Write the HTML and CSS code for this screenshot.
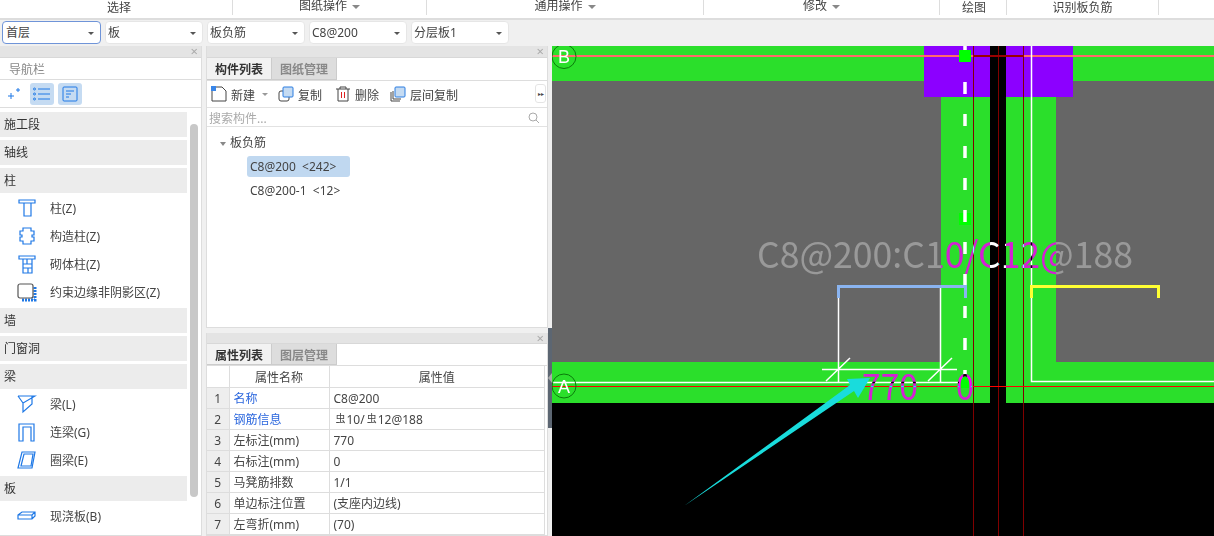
FILE: index.html
```html
<!DOCTYPE html>
<html lang="zh-CN">
<head>
    <meta charset="UTF-8">
    <title>识别板负筋</title>
    <link rel="stylesheet" href="styles.css">
</head>
<body>
    <div class="menu-groups">
        <div class="group g-select">选择</div>
        <div class="group g-paper">图纸操作<i class="caret"></i></div>
        <div class="group g-common">通用操作<i class="caret"></i></div>
        <div class="group g-edit">修改<i class="caret"></i></div>
        <div class="group g-draw">绘图</div>
        <div class="group g-detect">识别板负筋</div>
    </div>

    <div class="combos">
        <div class="combo active">首层<i class="caret small"></i></div>
        <div class="combo">板<i class="caret small"></i></div>
        <div class="combo">板负筋<i class="caret small"></i></div>
        <div class="combo">C8@200<i class="caret small"></i></div>
        <div class="combo">分层板1<i class="caret small"></i></div>
    </div>

    <div class="main">
        <!-- 导航栏 -->
        <div class="nav panel">
            <div class="panel-head"><span class="close">×</span></div>
            <div class="nav-title">导航栏</div>
            <div class="nav-tools">
                <svg class="tool-plus" width="14" height="14" viewBox="0 0 14 14"><path d="M1 9h6M4 6v6M9 3h4M11 1v4"/></svg>
                <span class="nav-btn">
                    <svg width="18" height="14" viewBox="0 0 18 14"><path d="M5 2h12M5 7h12M5 12h12"/><circle cx="1.500" cy="2" r="1"/><circle cx="1.500" cy="7" r="1"/><circle cx="1.500" cy="12" r="1"/></svg>
                </span>
                <span class="nav-btn">
                    <svg width="16" height="16" viewBox="0 0 16 16"><rect x="1" y="1" width="14" height="14" rx="1"/><path d="M4 5h8M4 8h5M4 11h3"/></svg>
                </span>
            </div>
            <div class="nav-body">
                <div class="nav-list">
                    <div class="cat">施工段</div>
                    <div class="cat">轴线</div>
                    <div class="cat">柱</div>
                    <div class="item">
                        <svg width="20" height="20" viewBox="0 0 20 20"><path d="M2 2h16v3h-4v13H7V5H2zM7 5h7"/></svg>柱(Z)
                    </div>
                    <div class="item">
                        <svg width="20" height="20" viewBox="0 0 20 20"><path d="M6 2h8v3h3v4h-2v2h2v4h-3v3H6v-3H3v-4h2V9H3V5h3z"/></svg>构造柱(Z)
                    </div>
                    <div class="item">
                        <svg width="20" height="20" viewBox="0 0 20 20"><path d="M2 2h16v3h-3v14H6V5H2zM6 5h9M6 10h9M6 14h9M10 5v5M11 14v5"/></svg>砌体柱(Z)
                    </div>
                    <div class="item">
                        <svg width="20" height="20" viewBox="0 0 20 20"><path class="hatch" d="M18 5v13H5"/><rect class="dark" x="1" y="2" width="15" height="14" rx="2"/></svg>约束边缘非阴影区(Z)
                    </div>
                    <div class="cat">墙</div>
                    <div class="cat">门窗洞</div>
                    <div class="cat">梁</div>
                    <div class="item">
                        <svg width="20" height="20" viewBox="0 0 20 20"><path d="M1 2h17L6 9v9l9-8V2M1 2l5 7"/></svg>梁(L)
                    </div>
                    <div class="item">
                        <svg width="20" height="20" viewBox="0 0 20 20"><path d="M2 19V2h15v17h-3V5H6v14z"/></svg>连梁(G)
                    </div>
                    <div class="item">
                        <svg width="20" height="20" viewBox="0 0 20 20"><path d="M5 2h13l-3 16H1zM7 4h9l-2 12H4z"/></svg>圈梁(E)
                    </div>
                    <div class="cat">板</div>
                    <div class="item">
                        <svg width="20" height="20" viewBox="0 0 20 20"><path d="M1 9l4-3h13v4l-3 3H1zM1 9h14l3-3M15 9v4"/></svg>现浇板(B)
                    </div>
                    <div class="item">
                        <svg width="20" height="20" viewBox="0 0 20 20"><path d="M2 2h16v8H2z"/></svg>
                    </div>
                </div>
                <div class="scrollbar"></div>
            </div>
        </div>

        <div class="middle">
            <!-- 构件列表 -->
            <div class="panel parts">
                <div class="panel-head"><span class="close">×</span></div>
                <div class="tabs">
                    <span class="tab on">构件列表</span>
                    <span class="tab">图纸管理</span>
                </div>
                <div class="part-tools">
                    <span class="ptool t-new">
                        <svg width="16" height="16" viewBox="0 0 16 16"><path class="dark" d="M1 5v10h14V5l-4-4H3"/><rect class="blue" x="0" y="0" width="5" height="5"/></svg>新建<i class="caret small"></i>
                    </span>
                    <span class="ptool t-copy">
                        <svg width="16" height="16" viewBox="0 0 16 16"><rect class="dark" x="1" y="5" width="10" height="10" rx="2"/><rect class="fill" x="5" y="1" width="10" height="10" rx="1"/></svg>复制
                    </span>
                    <span class="ptool t-del">
                        <svg width="16" height="16" viewBox="0 0 16 16"><path class="dark" d="M1 3h14M5 3V1h6v2M3 3v12h10V3"/><path class="red" d="M6.500 6v6M9.500 6v6"/></svg>删除
                    </span>
                    <span class="ptool t-floor">
                        <svg width="16" height="16" viewBox="0 0 16 16"><path class="dark" d="M1 6v9h9M3 5v8h8"/><rect class="fill" x="5" y="1" width="10" height="10" rx="1"/></svg>层间复制
                    </span>
                    <span class="more">▸▸</span>
                </div>
                <div class="search">
                    搜索构件...
                    <svg width="12" height="12" viewBox="0 0 12 12"><circle cx="5" cy="5" r="4"/><path d="M8 8l3 3"/></svg>
                </div>
                <div class="tree">
                    <div class="tree-head"><i class="caret"></i>板负筋</div>
                    <div class="tree-row selected">C8@200&nbsp; &lt;242&gt;</div>
                    <div class="tree-row">C8@200-1&nbsp; &lt;12&gt;</div>
                </div>
            </div>

            <!-- 属性列表 -->
            <div class="panel props">
                <div class="panel-head"><span class="close">×</span></div>
                <div class="tabs">
                    <span class="tab on">属性列表</span>
                    <span class="tab">图层管理</span>
                </div>
                <table class="prop-table">
                    <tr><th></th><th class="c-name">属性名称</th><th class="c-val">属性值</th></tr>
                    <tr><td class="idx">1</td><td class="link">名称</td><td>C8@200</td></tr>
                    <tr><td class="idx">2</td><td class="link">钢筋信息</td><td><span class="bar-mark">虫</span>10/<span class="bar-mark">虫</span>12@188</td></tr>
                    <tr><td class="idx">3</td><td>左标注(mm)</td><td>770</td></tr>
                    <tr><td class="idx">4</td><td>右标注(mm)</td><td>0</td></tr>
                    <tr><td class="idx">5</td><td>马凳筋排数</td><td>1/1</td></tr>
                    <tr><td class="idx">6</td><td>单边标注位置</td><td>(支座内边线)</td></tr>
                    <tr><td class="idx">7</td><td>左弯折(mm)</td><td>(70)</td></tr>
                </table>
            </div>
        </div>

        <div class="splitter"><span class="handle"></span></div>

        <!-- 绘图区 -->
        <svg class="canvas" width="662" height="490" viewBox="552 46 662 490">
            <rect x="552" y="46" width="662" height="490" fill="#000"/>
            <rect class="slab" x="552" y="81" width="389" height="281"/>
            <rect class="slab" x="1056" y="81" width="158" height="281"/>
            <path class="beam" d="M552 46H990V403H552V362H941V81H552Z"/>
            <path class="beam" d="M1006 46H1214V81H1056V362H1214V403H1006Z"/>
            <rect class="col" x="924" y="46" width="66" height="51"/>
            <rect class="col" x="1006" y="46" width="67" height="51"/>

            <path class="axis-dark" d="M973.500 46V536M998.500 46V536M1023.500 46V536"/>
            <path class="axis-top" d="M552 56H990M1006 56H1214"/>
            <path class="axis-top-dark" d="M973 56H1024"/>

            <path class="rebar" d="M1031.500 46V381.500H1214"/>
            <path class="rebar" d="M552 382.500H966M838.500 287V382M940.500 287V382M822 369.500H957M826 381L850 358M928 381L952 358"/>

            <path class="axis-red" d="M552 386.500H1214"/>

            <rect class="grip" x="959" y="50" width="12" height="12"/>
            <rect class="grip" x="959" y="213" width="12" height="12"/>
            <path class="dash" d="M965 46V50M965 82V382"/>
            <rect class="grip" x="959" y="377" width="12" height="11"/>

            <path class="br-blue" d="M838.500 298V286.500H965.500V298"/>
            <path class="br-yellow" d="M1031.500 298V286.500H1158.500V298"/>

            <circle class="axis-mark" cx="564" cy="56.500" r="12"/>
            <circle class="axis-mark" cx="564" cy="386" r="12"/>
            <text class="axis-letter" x="564" y="63">B</text>
            <text class="axis-letter" x="564" y="392.500">A</text>

            <text class="cad-text" x="757" y="268" textLength="376" lengthAdjust="spacingAndGlyphs">C8@200:C10/C12@188</text>
            <text class="cad-text" x="862" y="400" textLength="56" lengthAdjust="spacingAndGlyphs">770</text>
            <text class="cad-text" x="956" y="400" textLength="18" lengthAdjust="spacingAndGlyphs">0</text>

            <polygon class="arrow" points="684,506 850,385 847,379 870,378 858,398 854,391"/>
        </svg>
    </div>
</body>
</html>
```

FILE: styles.css
```css
* {
    box-sizing: border-box;
}

html, body {
    margin: 0;
    height: 536px;
    overflow: hidden;
}

body {
    width: 1214px;
    background: #f0f0f0;
    color: #444;
    font-family: "Noto Sans", "Noto Sans CJK SC", sans-serif;
    font-size: 12px;
}

.caret {
    display: inline-block;
    width: 0;
    height: 0;
    margin-left: 5px;
    border-left: 4px solid transparent;
    border-right: 4px solid transparent;
    border-top: 4px solid #888;
    vertical-align: middle;
}

.caret.small {
    border-left-width: 3px;
    border-right-width: 3px;
    border-top: 3px solid #555;
}

/* top menu group titles */
.menu-groups {
    display: flex;
    height: 20px;
    background: #fff;
    border-bottom: 2px solid #ddd;
}

.group {
    height: 15px;
    line-height: 14px;
    text-align: center;
    border-right: 1px solid #ddd;
}

.g-select { width: 233px; padding: 1px 0 0 6px; }
.g-paper { width: 194px; line-height: 12px; }
.g-common { width: 277px; line-height: 12px; }
.g-edit { width: 236px; line-height: 12px; }
.g-draw { width: 67px; padding: 1px 0 0 2px; }
.g-detect { width: 152px; padding-top: 1px; }

/* combos */
.combos {
    display: flex;
    gap: 4px;
    height: 26px;
    padding: 1px 0 0 2px;
}

.combo {
    position: relative;
    width: 98px;
    height: 23px;
    padding-left: 2px;
    line-height: 21px;
    background: #fff;
    border: 1px solid #e6e6e6;
    border-radius: 4px;
}

.combo.active {
    width: 99px;
    padding-left: 3px;
    border-color: #6f94d8;
}

.combo .caret {
    position: absolute;
    right: 6px;
    top: 10px;
}

.main {
    display: flex;
    height: 490px;
}

/* panels */
.panel {
    background: #fff;
    border: 1px solid #ddd;
    border-top: 0;
}

.panel-head {
    height: 12px;
    padding-right: 3px;
    background: #e4e4e4;
    border-bottom: 1px solid #d8d8d8;
    text-align: right;
    line-height: 11px;
}

.close {
    color: #aaa;
    font-size: 13px;
}

/* nav */
.nav {
    width: 202px;
    height: 490px;
    overflow: hidden;
    border-left: 0;
    flex: none;
}

.nav-title {
    height: 22px;
    padding-left: 9px;
    line-height: 23px;
    color: #888;
    border-bottom: 1px solid #ddd;
}

.nav-tools {
    display: flex;
    align-items: center;
    gap: 4px;
    height: 28px;
    padding-left: 7px;
    border-bottom: 1px solid #ddd;
}

.nav-tools svg {
    fill: none;
    stroke: #1e78e6;
    stroke-width: 1;
}

.tool-plus {
    margin-right: 5px;
}

.nav-btn {
    display: flex;
    align-items: center;
    justify-content: center;
    width: 24px;
    height: 22px;
    background: #c5dbf2;
    border-radius: 3px;
}

.nav-body {
    display: flex;
    padding-top: 4px;
}

.nav-list {
    width: 187px;
    flex: none;
}

.cat {
    height: 25px;
    margin-bottom: 3px;
    padding-left: 4px;
    line-height: 26px;
    background: #ececec;
    color: #333;
}

.item {
    display: flex;
    align-items: center;
    height: 28px;
    padding-left: 17px;
}

.cat + .item {
    margin-top: -2px;
}

.item + .cat {
    margin-top: 2px;
}

.item svg {
    width: 20px;
    height: 20px;
    margin-right: 13px;
    fill: none;
    stroke: #1e78e6;
    stroke-width: 1.200;
}

.item svg .dark {
    stroke: #555;
    fill: #fff;
}

.item svg .hatch {
    stroke-width: 3;
    stroke-dasharray: 2 1;
}

.scrollbar {
    width: 8px;
    height: 373px;
    margin: 12px 0 0 3px;
    background: #c8c8c8;
    border-radius: 4px;
}

/* middle */
.middle {
    display: flex;
    flex-direction: column;
    gap: 5px;
    width: 342px;
    margin-left: 4px;
    flex: none;
}

.parts {
    height: 282px;
}

.props {
    flex: 1;
    overflow: hidden;
}

.props .panel-head {
    height: 11px;
}

.tabs {
    display: flex;
    height: 23px;
    border-bottom: 1px solid #ddd;
}

.props .tabs {
    height: 22px;
}

.tab {
    width: 65px;
    padding-left: 8px;
    line-height: 24px;
    color: #888;
    background: #ddd;
    border: 1px solid #ccc;
    border-top: 0;
    border-left: 0;
    font-weight: 700;
}

.tab.on {
    color: #333;
    background: #f2f2f2;
}

.part-tools {
    position: relative;
    display: flex;
    align-items: center;
    height: 27px;
    padding: 1px 0 0 4px;
    border-bottom: 1px solid #e2e2e2;
}

.ptool {
    display: flex;
    align-items: center;
}

.ptool svg {
    margin: -2px 4px 0 0;
    fill: none;
    stroke-width: 1;
}

.ptool .dark { stroke: #444; fill: #fff; }
.ptool .fill { stroke: #2a7de1; fill: #c5dbf2; }
.ptool .blue { fill: #3a86e8; stroke: none; }
.ptool .red { stroke: #d22; }

.t-new { width: 67px; }
.t-copy { width: 57px; }
.t-del { width: 55px; }

.t-new .caret {
    margin-left: 7px;
    border-top-color: #999;
}

.more {
    position: absolute;
    right: 1px;
    top: 3px;
    width: 11px;
    height: 19px;
    font-size: 6px;
    line-height: 18px;
    text-align: center;
    white-space: nowrap;
    background: #fff;
    border: 1px solid #e4e4e4;
    border-radius: 3px;
}

.search {
    display: flex;
    align-items: center;
    justify-content: space-between;
    height: 19px;
    padding: 1px 7px 0 2px;
    color: #aaa;
    border-bottom: 1px solid #e2e2e2;
}

.search svg {
    fill: none;
    stroke: #aaa;
}

.tree {
    padding: 6px 0 0 13px;
}

.tree-head {
    height: 20px;
    line-height: 20px;
}

.tree-head .caret {
    margin: 0 4px 0 0;
    border-left-width: 3px;
    border-right-width: 3px;
}

.tree-row {
    width: 103px;
    height: 21px;
    margin: 3px 0 3px 27px;
    padding-left: 3px;
    line-height: 21px;
    border-radius: 3px;
}

.tree-row.selected {
    background: #c0d8f0;
}

/* props table */
.prop-table {
    width: 338px;
    border-collapse: collapse;
    table-layout: fixed;
}

.prop-table tr {
    height: 21px;
}

.prop-table th,
.prop-table td {
    padding: 2px 0 0 4px;
    border: 1px solid #ddd;
    border-top: 0;
    font-weight: 400;
    white-space: nowrap;
    line-height: 18px;
}

.prop-table th {
    text-align: center;
    padding: 3px 0 0;
    line-height: 17px;
}

.prop-table tr > :first-child {
    width: 22px;
    border-left: 0;
}

.c-name {
    width: 100px;
}

.prop-table .idx {
    background: #eee;
    text-align: center;
    padding: 2px 0 0;
}

.link {
    color: #2a66dd;
}

.bar-mark {
    font-size: 10px;
    position: relative;
    top: -2px;
    margin: 0 1px 0 2px;
}

/* splitter beside canvas */
.splitter {
    position: relative;
    width: 4px;
    flex: none;
}

.splitter::before {
    content: "";
    display: block;
    width: 4px;
    height: 100px;
    margin-top: 282px;
    background: #5c6672;
}

.handle {
    position: absolute;
    left: 0;
    top: 327px;
    width: 0;
    height: 0;
    border-top: 5px solid transparent;
    border-bottom: 5px solid transparent;
    border-right: 4px solid #aaa;
}

/* cad canvas */
.canvas {
    display: block;
    flex: none;
}

.slab { fill: #666; }
.beam { fill: #2bdf2b; }
.col { fill: #8c00ff; }

.axis-dark { stroke: #800000; stroke-width: 1; fill: none; }
.axis-top { stroke: #ff6a6a; stroke-width: 2; fill: none; }
.axis-top-dark { stroke: #900; stroke-width: 2; fill: none; }
.axis-red { stroke: #f00; stroke-width: 1; fill: none; }

.rebar { stroke: #fff; stroke-width: 1.500; fill: none; }
.dash { stroke: #fff; stroke-width: 3.500; stroke-dasharray: 12 20; fill: none; }
.grip { fill: #00ff00; }

.br-blue { stroke: #8ab4f0; stroke-width: 3; fill: none; }
.br-yellow { stroke: #ffff33; stroke-width: 3; fill: none; }

.axis-mark {
    fill: none;
    stroke: #0b7a0b;
    stroke-width: 1;
}

.axis-letter {
    fill: #fff;
    font-family: "Liberation Sans", sans-serif;
    font-size: 18px;
    text-anchor: middle;
}

.cad-text {
    fill: #fff;
    font-family: "Noto Sans CJK SC", sans-serif;
    font-size: 36px;
    mix-blend-mode: difference;
}

.arrow { fill: #19dcdc; }
```
